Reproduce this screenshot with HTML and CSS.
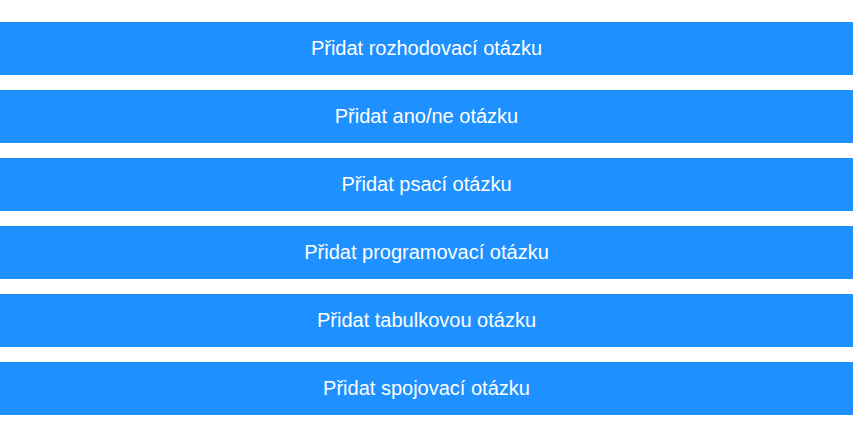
FILE: index.html
```html
<!DOCTYPE html>
<html lang="cs">
<head>
<meta charset="utf-8">
<link rel="stylesheet" href="styles.css">
</head>
<body>
<div class="list">
  <button class="btn">Přidat rozhodovací otázku</button>
  <button class="btn">Přidat ano/ne otázku</button>
  <button class="btn">Přidat psací otázku</button>
  <button class="btn">Přidat programovací otázku</button>
  <button class="btn">Přidat tabulkovou otázku</button>
  <button class="btn">Přidat spojovací otázku</button>
</div>
</body>
</html>
```
FILE: styles.css
```css
html, body { margin: 0; padding: 0; background: #fff; }
.list {
  display: flex;
  flex-direction: column;
  gap: 15px;
  padding-top: 22px;
}
.btn {
  display: block;
  width: 100%;
  height: 53px;
  margin: 0;
  border: none;
  background: #1e90ff;
  color: #fff;
  font-family: "Liberation Sans", Arial, sans-serif;
  font-size: 20px;
  padding: 0;
}
```
